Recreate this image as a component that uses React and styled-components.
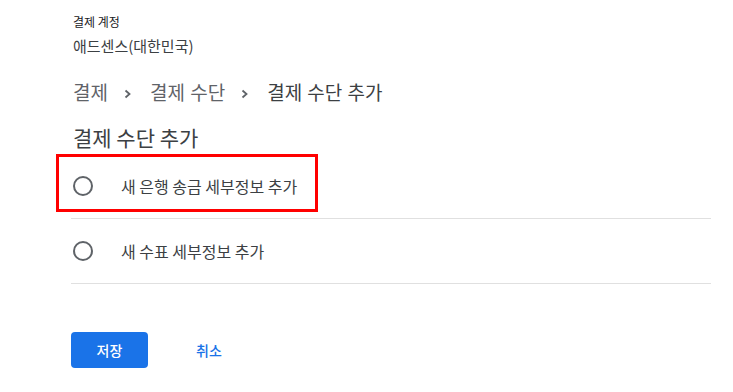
import React from "react";
import styled, { createGlobalStyle } from "styled-components";

const Global = createGlobalStyle`
  html, body { margin: 0; padding: 0; background: #fff; }
  body { font-family: "Noto Sans CJK KR", "Noto Sans", sans-serif; color: #3c4043; }
`;

const Page = styled.div`
  padding: 0 22px 0 71px;
  width: 640px;
`;

const AccountLabel = styled.div`
  margin: 15px 0 0 2px;
  font-size: 12px;
  line-height: 14px;
  color: #202124;
`;

const AccountName = styled.div`
  margin: 7px 0 0 2px;
  font-size: 15px;
  line-height: 20px;
  color: #3c4043;
`;

const Breadcrumb = styled.nav`
  display: flex;
  align-items: center;
  margin: 24px 0 0 2px;
  height: 24px;
`;

const Crumb = styled.span`
  font-size: 19px;
  line-height: 24px;
  word-spacing: 1px;
  color: ${(p) => (p.$current ? "#3c4043" : "#5f6368")};
  white-space: nowrap;
`;

const Sep = styled.svg`
  width: 8px;
  height: 10px;
  margin: 3px 18px 0 16px;
  flex: none;
`;

const Heading = styled.h2`
  margin: 21px 0 0 2px;
  font-size: 21px;
  line-height: 24px;
  font-weight: 400;
  color: #3c4043;
`;

const List = styled.div`
  margin-top: 5px;
`;

const Row = styled.label`
  position: relative;
  display: flex;
  align-items: center;
  height: 64px;
  border-bottom: 1px solid #e0e0e0;
  cursor: pointer;
`;

const Radio = styled.span`
  box-sizing: border-box;
  width: 20px;
  height: 20px;
  margin-left: 2px;
  border: 2px solid #5f6368;
  border-radius: 50%;
  flex: none;
`;

const RowText = styled.span`
  margin-left: 28px;
  font-size: 16px;
  line-height: 20px;
  color: #3c4043;
`;

const Highlight = styled.span`
  position: absolute;
  left: -15px;
  top: 0;
  width: 262px;
  height: 58px;
  box-sizing: border-box;
  border: 3px solid #f00;
  pointer-events: none;
`;

const Actions = styled.div`
  display: flex;
  align-items: center;
  margin-top: 48px;
`;

const SaveButton = styled.button`
  width: 77px;
  height: 36px;
  border: none;
  border-radius: 4px;
  background: #1a73e8;
  color: #fff;
  font-family: inherit;
  font-size: 14px;
  font-weight: 500;
`;

const CancelButton = styled.button`
  margin-left: 24px;
  padding: 0 24px;
  height: 36px;
  border: none;
  background: transparent;
  color: #1a73e8;
  font-family: inherit;
  font-size: 14px;
  font-weight: 500;
`;

const Chevron = () => (
  <Sep viewBox="0 0 8 10">
    <path d="M1.5 1.5 L5.5 5 L1.5 8.5" fill="none" stroke="#5f6368" strokeWidth="1.8" />
  </Sep>
);

export default function App() {
  return (
    <>
      <Global />
      <Page>
        <AccountLabel>결제 계정</AccountLabel>
        <AccountName>애드센스(대한민국)</AccountName>
        <Breadcrumb>
          <Crumb>결제</Crumb>
          <Chevron />
          <Crumb>결제 수단</Crumb>
          <Chevron />
          <Crumb $current>결제 수단 추가</Crumb>
        </Breadcrumb>
        <Heading>결제 수단 추가</Heading>
        <List>
          <Row>
            <Radio />
            <RowText>새 은행 송금 세부정보 추가</RowText>
            <Highlight />
          </Row>
          <Row>
            <Radio />
            <RowText>새 수표 세부정보 추가</RowText>
          </Row>
        </List>
        <Actions>
          <SaveButton>저장</SaveButton>
          <CancelButton>취소</CancelButton>
        </Actions>
      </Page>
    </>
  );
}
